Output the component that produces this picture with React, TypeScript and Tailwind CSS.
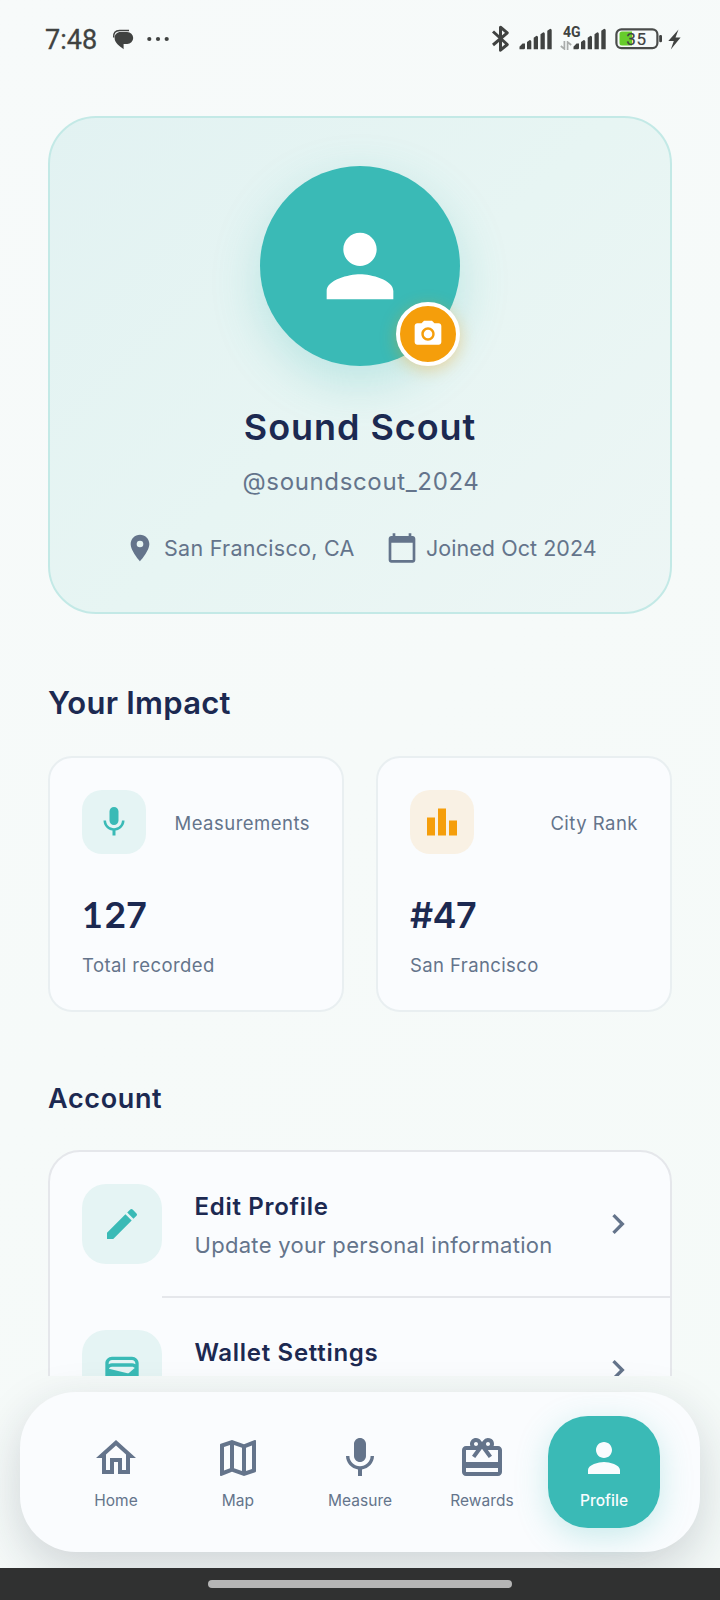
import type { ReactNode } from "react";
import {
  MdCameraAlt,
  MdCardGiftcard,
  MdChevronRight,
  MdEdit,
  MdLocationOn,
  MdMic,
  MdOutlineHome,
  MdOutlineMap,
  MdPerson,
  MdWallet,
} from "react-icons/md";

function SignalBars() {
  return (
    <svg width="33" height="22" viewBox="0 0 33 22" fill="#404241">
      <path d="M.5 21.300v-2.600l3-3.200H6v4.500a1.300 1.300 0 0 1-1.300 1.300z" />
      <path d="M8 14l2.800-2a1.500 1.500 0 0 1 1.500 1.500v7.800H8z" />
      <path d="M14.700 9.700l2.800-2A1.500 1.500 0 0 1 19 9.200v12.100h-4.300z" />
      <path d="M21.500 6.200l2.800-2a1.500 1.500 0 0 1 1.500 1.500v15.600h-4.300z" />
      <path d="M28.300 2.700l2.900-2a1.500 1.500 0 0 1 1.500 1.500v19.100h-4.400z" />
    </svg>
  );
}

function StatusBar() {
  return (
    <div className="flex h-[78px] shrink-0 items-start justify-between pl-[45px] pr-[39px] pt-[23px] text-[#404241]">
      <div className="flex h-8 items-center">
        <span className="w-[53px] whitespace-nowrap pt-px font-[Roboto] text-[27px] leading-8 [-webkit-text-stroke:0.3px_#404241]">7:48</span>
        <svg className="ml-[14px]" width="22" height="22" viewBox="0 0 22 22" fill="#404241">
          <path d="M8.500 4H15a6 6 0 0 1 6.200 6 6 6 0 0 1-6.200 6h-3.400v5.300C8 18 2.600 15.500 2.600 10c0-3.500 2.400-6 5.900-6z" />
          <path d="M1.700 9.500C1.200 5 3.500 2.600 7.500 2.600h9.500" fill="none" stroke="#404241" strokeWidth="1.500" />
        </svg>
        <svg className="ml-[12px]" width="24" height="6" viewBox="0 0 24 6" fill="#404241">
          <circle cx="3.300" cy="3" r="2.100" />
          <circle cx="12" cy="3" r="2.100" />
          <circle cx="20.700" cy="3" r="2.100" />
        </svg>
      </div>
      <div className="flex h-8 items-center">
        <svg width="20" height="30" viewBox="0 0 20 30" fill="none" stroke="#404241" strokeWidth="3">
          <path d="M2 7.500 16.300 20.500 9.500 26.200V3.200L16.300 8.800 2 21" strokeLinejoin="round" />
        </svg>
        <div className="ml-[8px]">
          <SignalBars />
        </div>
        <div className="relative ml-[21px]">
          <SignalBars />
          <span className="absolute -left-[10px] -top-[4px] font-[Roboto] text-[14px] font-bold leading-4">4G</span>
          <svg className="absolute -left-[13px] top-[13px]" width="12" height="9" viewBox="0 0 12 9" fill="none" stroke="#a9acab" strokeWidth="1.700">
            <path d="M4.400 0v8L.8 5M7.600 9V1l3.600 3" />
          </svg>
        </div>
        <svg className="ml-[9px]" width="48" height="22" viewBox="0 0 48 22">
          <rect x="1.400" y="1.300" width="41" height="18.800" rx="5" fill="none" stroke="#4a4c4b" strokeWidth="2.200" />
          <path d="M7 3.500h10v14H7a2.500 2.500 0 0 1-2.500-2.500V6A2.500 2.500 0 0 1 7 3.500z" fill="#66cc2b" />
          <rect x="44.200" y="7" width="2.800" height="7.300" rx="1.200" fill="#404241" />
          <text x="21.600" y="17" textAnchor="middle" fontFamily="Roboto" fontSize="17" letterSpacing="0.800" fill="#404241" stroke="#404241" strokeWidth="0.200">
            35
          </text>
        </svg>
        <svg className="ml-[5px]" width="13" height="21" viewBox="0 0 13 21" fill="#404241">
          <path d="M10.500.5.300 12h5.500L2.800 20.500 12.600 8.500H7.500z" />
        </svg>
      </div>
    </div>
  );
}

function CalendarIcon() {
  return (
    <svg width="32" height="32" viewBox="0 0 24 24" fill="currentColor">
      <path d="M20 3h-1V1h-2v2H7V1H5v2H4c-1.100 0-2 .9-2 2v16c0 1.100.9 2 2 2h16c1.100 0 2-.9 2-2V5c0-1.100-.9-2-2-2zm0 18H4V8h16v13z" />
    </svg>
  );
}

function ProfileCard() {
  return (
    <section className="flex h-[498px] shrink-0 flex-col items-center rounded-[48px] border-2 border-[#c3e9e6] bg-linear-135 from-[#e2f2f2] via-[#e7f5f3] to-[#edf6f5] pt-12">
      <div className="relative flex size-[200px] shrink-0 items-center justify-center rounded-full bg-[#3abab6] shadow-[0_16px_48px_rgba(58,186,182,0.26)]">
        <MdPerson size={100} color="#fff" />
        <div className="absolute bottom-0 right-0 flex size-16 items-center justify-center rounded-full border-4 border-white bg-[#f59e0b] shadow-[0_4px_16px_rgba(245,158,11,0.35)]">
          <MdCameraAlt size={32} color="#fff" />
        </div>
      </div>
      <h1 className="mt-[39px] whitespace-nowrap text-[36px] font-semibold leading-[44px] tracking-[0.950px] text-[#1c2951]">Sound Scout</h1>
      <p className="mt-[17px] whitespace-nowrap pl-[2px] text-[24px] leading-8 tracking-[0.650px] text-[#64748b]">@soundscout_2024</p>
      <div className="mt-[34px] flex h-8 items-center text-[21.5px] text-[#64748b]">
        <MdLocationOn size={32} />
        <span className="ml-2 w-[190px] whitespace-nowrap tracking-[0.280px]">San Francisco, CA</span>
        <div className="ml-8">
          <CalendarIcon />
        </div>
        <span className="ml-2 w-[170px] whitespace-nowrap tracking-[0.050px]">Joined Oct 2024</span>
      </div>
    </section>
  );
}

function StatCard({ icon, tile, label, value, note }: { icon: ReactNode; tile: string; label: string; value: ReactNode; note: string }) {
  return (
    <div className="h-64 rounded-3xl border-2 border-[#e9eff1] bg-[#fafcfe] p-8">
      <div className="flex items-center justify-between">
        <div className={`flex size-16 items-center justify-center rounded-[20px] ${tile}`}>{icon}</div>
        <span className="whitespace-nowrap pt-[2px] text-[18.5px] leading-7 tracking-[0.480px] text-[#64748b]">{label}</span>
      </div>
      <div className="mt-[39px] h-[44px] whitespace-nowrap text-[36px] font-semibold leading-[44px] text-[#1c2951]">{value}</div>
      <div className="mt-[14px] whitespace-nowrap text-[18.5px] leading-7 tracking-[0.400px] text-[#64748b]">{note}</div>
    </div>
  );
}

function BarsIcon() {
  return (
    <svg width="36" height="36" viewBox="0 0 36 36" fill="#f59e0b">
      <rect x="3" y="13.500" width="8" height="18" />
      <rect x="14" y="4.500" width="8" height="27" />
      <rect x="25" y="16.500" width="8" height="15" />
    </svg>
  );
}

function AccountRow({ icon, title, note }: { icon: ReactNode; title: string; note?: string }) {
  return (
    <div className="flex h-[144px] shrink-0 items-start p-8">
      <div className="flex size-20 shrink-0 items-center justify-center rounded-3xl bg-[#e5f4f4] text-[#3abab6]">{icon}</div>
      <div className="ml-8 grow whitespace-nowrap pl-[0.5px] pt-[7px]">
        <div className="text-[24px] font-semibold leading-8 tracking-[0.700px] text-[#1c2951]">{title}</div>
        {note && <div className="mt-[7px] text-[22px] leading-[30px] tracking-[0.300px] text-[#64748b]">{note}</div>}
      </div>
      <MdChevronRight className="shrink-0 self-center" size={40} color="#64748b" />
    </div>
  );
}

function NavItem({ icon, label, active = false }: { icon: ReactNode; label: string; active?: boolean }) {
  return (
    <div
      className={
        active
          ? "mx-[5px] flex h-28 w-28 flex-col items-center rounded-[40px] bg-[#3abab6] pt-[18px] font-medium text-[#fafcfe] shadow-[0_8px_32px_rgba(58,186,182,0.26)]"
          : "flex h-28 w-[122px] flex-col items-center pt-[18px] text-[#64748b]"
      }
    >
      {icon}
      <span className="mt-[9px] whitespace-nowrap text-[15.5px] leading-5 tracking-[0.050px]">{label}</span>
    </div>
  );
}

export default function App() {
  return (
    <div className="flex h-[1600px] w-[720px] flex-col overflow-hidden bg-linear-135 from-[#f7fafa] to-[#f5faf8] font-[Inter,'Liberation_Sans',sans-serif]">
      <StatusBar />
      <main className="flex h-[1298px] shrink-0 flex-col overflow-hidden px-12 pt-[38px]">
        <ProfileCard />
        <h2 className="mt-[69px] whitespace-nowrap text-[31px] font-semibold leading-10 tracking-[0.250px] text-[#1c2951]">Your Impact</h2>
        <div className="mt-[33px] grid shrink-0 grid-cols-2 gap-8">
          <StatCard
            icon={<MdMic size={36} color="#3abab6" />}
            tile="bg-[#e5f4f4]"
            label="Measurements"
            value={
              <>
                <span className="font-[Lato] font-bold leading-none tracking-[1px]">1</span>27
              </>
            }
            note="Total recorded"
          />
          <StatCard icon={<BarsIcon />} tile="bg-[#f9f1e4]" label="City Rank" value={<span className="tracking-[-0.600px]">#47</span>} note="San Francisco" />
        </div>
        <h2 className="mt-[69px] whitespace-nowrap text-[27px] font-semibold leading-9 tracking-[0.650px] text-[#1c2951]">Account</h2>
        <section className="mt-[33px] flex h-[440px] shrink-0 flex-col rounded-[32px] border-2 border-[#e5e7eb] bg-[#fafcfe]">
          <AccountRow icon={<MdEdit size={40} />} title="Edit Profile" note="Update your personal information" />
          <div className="ml-28 h-[2px] shrink-0 bg-[#e5e7eb]" />
          <AccountRow icon={<MdWallet size={40} />} title="Wallet Settings" />
        </section>
      </main>
      <nav className="relative mx-5 mt-4 flex h-40 shrink-0 items-center rounded-[56px] bg-[#fafcfe] pl-[35px] shadow-[0_16px_48px_rgba(28,41,61,0.18)]">
        <NavItem icon={<MdOutlineHome size={48} />} label="Home" />
        <NavItem icon={<MdOutlineMap size={48} />} label="Map" />
        <NavItem icon={<MdMic size={48} />} label="Measure" />
        <NavItem icon={<MdCardGiftcard size={48} />} label="Rewards" />
        <NavItem icon={<MdPerson size={48} />} label="Profile" active />
      </nav>
      <div className="relative mt-4 flex h-8 shrink-0 items-center justify-center bg-[#303131]">
        <div className="h-2 w-[304px] rounded-full bg-[#b5b5b5]" />
      </div>
    </div>
  );
}
